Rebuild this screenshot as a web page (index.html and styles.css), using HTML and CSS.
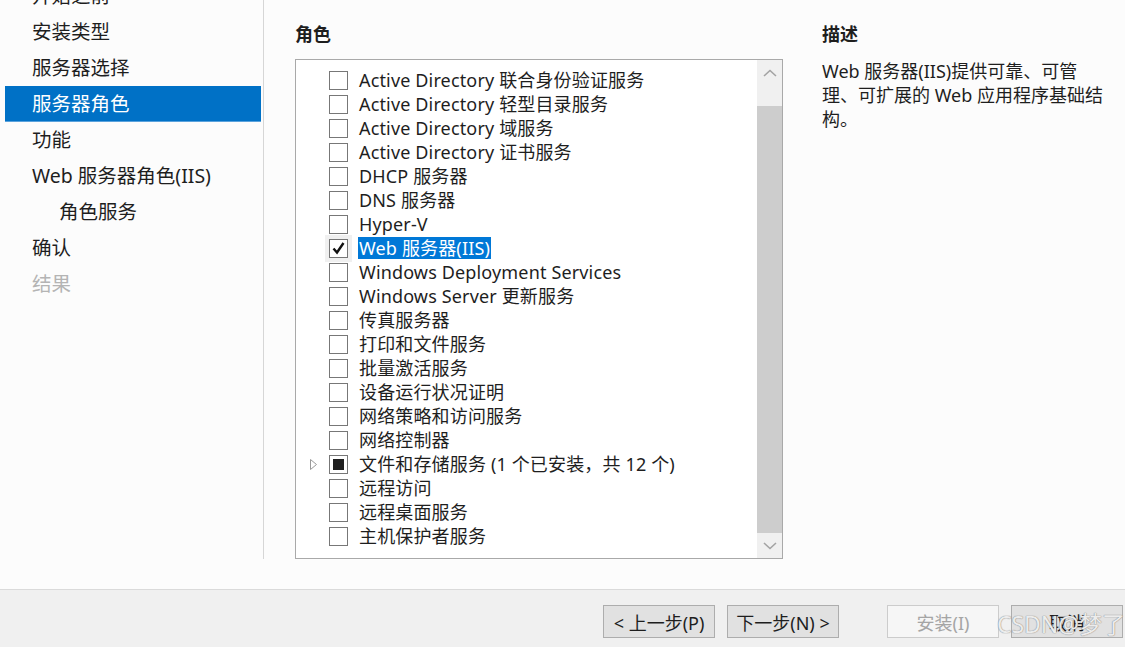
FILE: index.html
```html
<!DOCTYPE html>
<html lang="zh-CN">
  <head>
    <meta charset="UTF-8" />
    <meta name="viewport" content="width=device-width, initial-scale=1.0" />
    <title>添加角色和功能向导</title>
    <link rel="stylesheet" href="styles.css">
  </head>
  <body>
    <div class="wizard">
      <div class="wizard-body">
        <nav class="steps">
          <div class="step">开始之前</div>
          <div class="step">安装类型</div>
          <div class="step">服务器选择</div>
          <div class="step active">服务器角色</div>
          <div class="step">功能</div>
          <div class="step">Web 服务器角色(IIS)</div>
          <div class="step sub">角色服务</div>
          <div class="step">确认</div>
          <div class="step disabled">结果</div>
        </nav>

        <section class="roles">
          <h2 class="section-title">角色</h2>
          <div class="role-box">
            <ul class="role-list">
              <li class="role"><span class="expander"></span><span class="check"></span><span class="label">Active Directory 联合身份验证服务</span></li>
              <li class="role"><span class="expander"></span><span class="check"></span><span class="label">Active Directory 轻型目录服务</span></li>
              <li class="role"><span class="expander"></span><span class="check"></span><span class="label">Active Directory 域服务</span></li>
              <li class="role"><span class="expander"></span><span class="check"></span><span class="label">Active Directory 证书服务</span></li>
              <li class="role"><span class="expander"></span><span class="check"></span><span class="label">DHCP 服务器</span></li>
              <li class="role"><span class="expander"></span><span class="check"></span><span class="label">DNS 服务器</span></li>
              <li class="role"><span class="expander"></span><span class="check"></span><span class="label">Hyper-V</span></li>
              <li class="role selected">
                <span class="expander"></span>
                <span class="check checked">
                  <svg width="15" height="15" viewBox="0 0 15 15"><polyline points="2.5,7.5 6,11.5 12.5,2" fill="none" stroke="#111111" stroke-width="2.4"/></svg>
                </span>
                <span class="label">Web 服务器(IIS)</span>
              </li>
              <li class="role"><span class="expander"></span><span class="check"></span><span class="label">Windows Deployment Services</span></li>
              <li class="role"><span class="expander"></span><span class="check"></span><span class="label">Windows Server 更新服务</span></li>
              <li class="role"><span class="expander"></span><span class="check"></span><span class="label">传真服务器</span></li>
              <li class="role"><span class="expander"></span><span class="check"></span><span class="label">打印和文件服务</span></li>
              <li class="role"><span class="expander"></span><span class="check"></span><span class="label">批量激活服务</span></li>
              <li class="role"><span class="expander"></span><span class="check"></span><span class="label">设备运行状况证明</span></li>
              <li class="role"><span class="expander"></span><span class="check"></span><span class="label">网络策略和访问服务</span></li>
              <li class="role"><span class="expander"></span><span class="check"></span><span class="label">网络控制器</span></li>
              <li class="role">
                <span class="expander">
                  <svg width="9" height="13" viewBox="0 0 9 13"><polygon points="1.5,1.5 7.5,6.5 1.5,11.5" fill="none" stroke="#9a9a9a" stroke-width="1"/></svg>
                </span>
                <span class="check partial"></span>
                <span class="label">文件和存储服务 (1 个已安装，共 12 个)</span>
              </li>
              <li class="role"><span class="expander"></span><span class="check"></span><span class="label">远程访问</span></li>
              <li class="role"><span class="expander"></span><span class="check"></span><span class="label">远程桌面服务</span></li>
              <li class="role"><span class="expander"></span><span class="check"></span><span class="label">主机保护者服务</span></li>
            </ul>
            <div class="scrollbar">
              <div class="scroll-btn">
                <svg width="14" height="8" viewBox="0 0 14 8"><polyline points="1,7 7,1.5 13,7" fill="none" stroke="#a3a3a3" stroke-width="1.6"/></svg>
              </div>
              <div class="scroll-track"><div class="scroll-thumb"></div></div>
              <div class="scroll-btn">
                <svg width="14" height="8" viewBox="0 0 14 8"><polyline points="1,1 7,6.5 13,1" fill="none" stroke="#a3a3a3" stroke-width="1.6"/></svg>
              </div>
            </div>
          </div>
        </section>

        <section class="description">
          <h2 class="section-title">描述</h2>
          <p class="desc-text">Web 服务器(IIS)提供可靠、可管理、可扩展的 Web 应用程序基础结构。</p>
        </section>
      </div>

      <footer class="wizard-footer">
        <button class="btn">&lt; 上一步(P)</button>
        <button class="btn">下一步(N) &gt;</button>
        <button class="btn install" disabled>安装(I)</button>
        <button class="btn">取消</button>
        <span class="watermark">CSDN@梦了</span>
      </footer>
    </div>
  </body>
</html>
```

FILE: styles.css
```css
* {
  margin: 0;
  padding: 0;
  box-sizing: border-box;
}

body {
  font-family: 'Noto Sans', 'Noto Sans CJK SC', sans-serif;
  background: #fcfcfc;
  color: #1e1e1e;
  overflow: hidden;
}

.wizard {
  width: 1125px;
  height: 647px;
  display: flex;
  flex-direction: column;
}

.wizard-body {
  height: 590px;
  display: flex;
  align-items: flex-start;
  border-bottom: 1px solid #dadada;
}

/* left step list */
.steps {
  width: 264px;
  height: 559px;
  border-right: 1px solid #d6d6d6;
  padding-left: 5px;
  padding-right: 2px;
  overflow: hidden;
}

.step {
  height: 36px;
  line-height: 36px;
  padding-left: 27px;
  font-size: 19.5px;
  white-space: nowrap;
}

.step:first-child {
  margin-top: -22px;
}

.step.sub {
  padding-left: 54px;
}

.step.active {
  background: #0071c6;
  color: #ffffff;
  border-bottom: 1px solid #5aa2dc;
}

.step.disabled {
  color: #b4b4b4;
}

/* roles */
.roles {
  margin-left: 31px;
  width: 488px;
}

.section-title {
  font-size: 18px;
  font-weight: bold;
  line-height: 24px;
  margin-top: 22px;
  margin-bottom: 13px;
}

.role-box {
  height: 500px;
  border: 1px solid #a9a9a9;
  background: #ffffff;
  display: flex;
}

.role-list {
  flex: 1;
  list-style: none;
  padding: 8px 0 0 12px;
}

.role {
  height: 24px;
  display: flex;
  align-items: center;
  font-size: 18px;
  letter-spacing: 0.15px;
  white-space: nowrap;
}

.expander {
  width: 21px;
  height: 24px;
  display: flex;
  align-items: center;
  padding-left: 1px;
}

.check {
  width: 19px;
  height: 19px;
  border: 1px solid #777777;
  background: #ffffff;
  display: flex;
  align-items: center;
  justify-content: center;
}

.check.partial::after {
  content: '';
  width: 11px;
  height: 11px;
  background: #1f1f1f;
}

.label {
  margin-left: 10px;
  padding: 0 1px;
  line-height: 22px;
}

.role.selected .expander {
  background: linear-gradient(to right, transparent 17px, #f0f0f0 17px);
}

.role.selected .check {
  box-shadow: 0 0 0 4px #f0f0f0;
}

.role.selected .label {
  background: #0078d7;
  color: #ffffff;
}

.scrollbar {
  width: 25px;
  display: flex;
  flex-direction: column;
  background: #f0f0f0;
}

.scroll-btn {
  height: 25px;
  display: flex;
  align-items: center;
  justify-content: center;
}

.scroll-track {
  flex: 1;
  padding-top: 21px;
  display: flex;
  flex-direction: column;
}

.scroll-thumb {
  flex: 1;
  background: #cdcdcd;
}

/* description */
.description {
  margin-left: 39px;
  width: 281px;
}

.desc-text {
  font-size: 18px;
  line-height: 24px;
}

/* footer */
.wizard-footer {
  flex: 1;
  background: #f0f0f0;
  display: flex;
  align-items: flex-start;
  justify-content: flex-end;
  gap: 12px;
  padding-top: 15px;
  padding-right: 2px;
  position: relative;
}

.btn {
  width: 112px;
  height: 33px;
  font-family: 'Noto Sans', 'Noto Sans CJK SC', sans-serif;
  font-size: 18px;
  color: #1e1e1e;
  background: #e1e1e1;
  border: 1px solid #adadad;
}

.btn.install {
  margin-left: 36px;
  background: #f6f6f6;
  border-color: #cccccc;
  color: #a5a5a5;
}

.watermark {
  position: absolute;
  right: 0;
  top: 16px;
  font-size: 23px;
  color: rgba(255, 255, 255, 0.85);
  text-shadow: 0 0 1px #8a8a8a, 0 0 1px #8a8a8a;
  pointer-events: none;
}
```
